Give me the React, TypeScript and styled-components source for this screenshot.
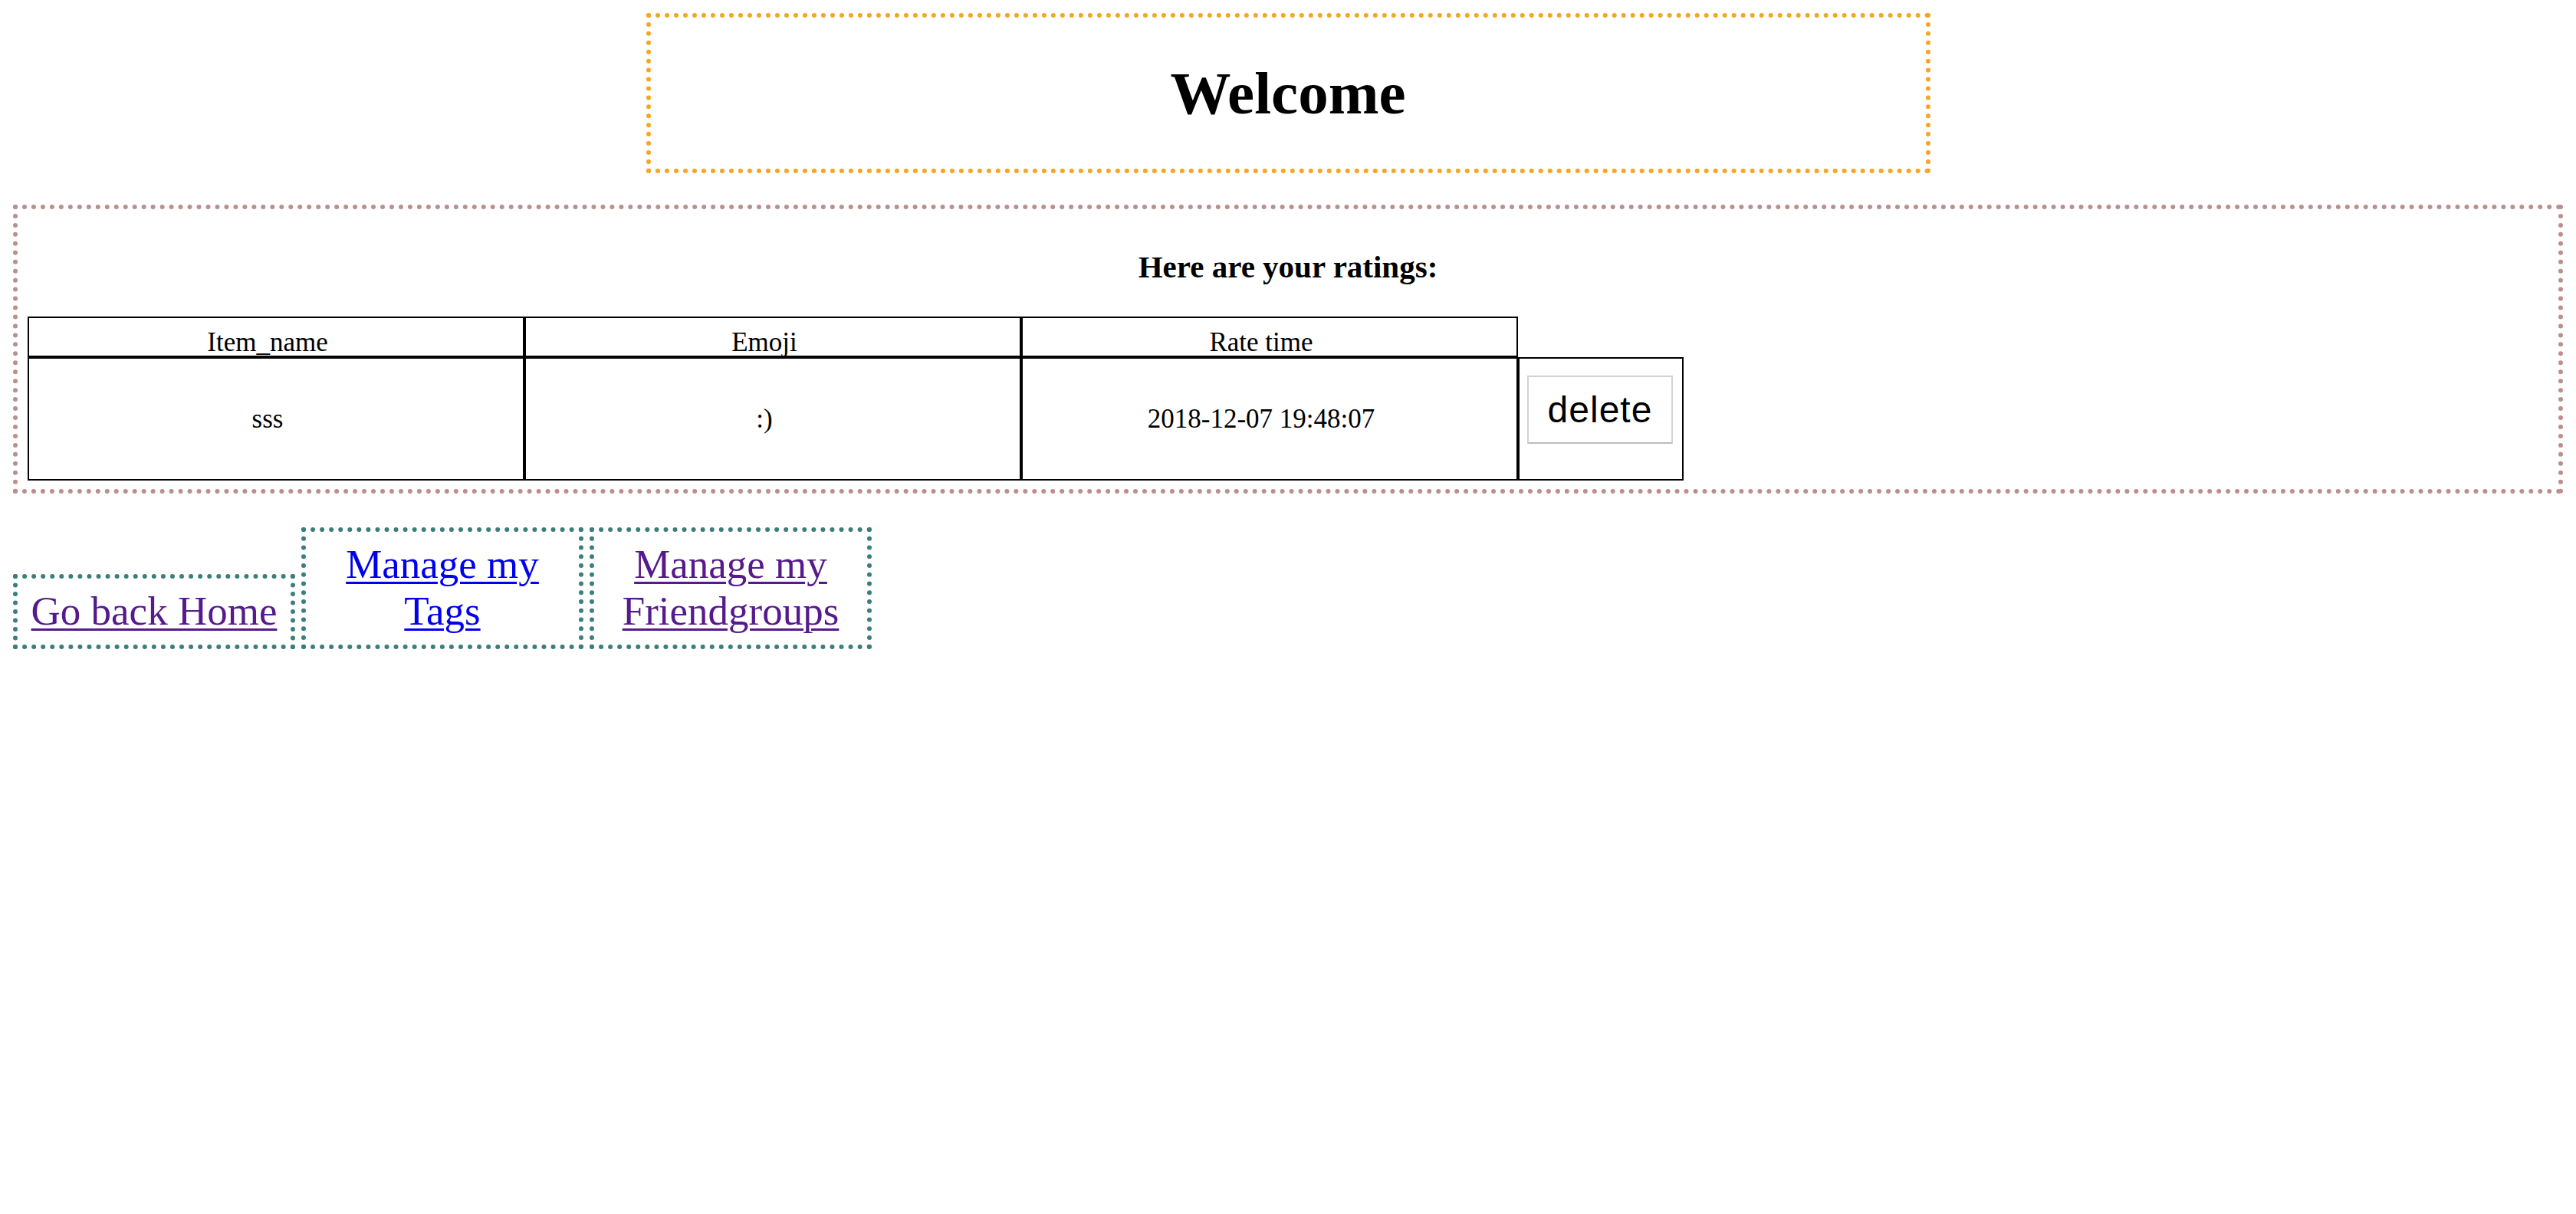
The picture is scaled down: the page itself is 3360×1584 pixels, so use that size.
import React from "react";
import styled, { createGlobalStyle } from "styled-components";

const GlobalStyle = createGlobalStyle`
  html, body {
    background: #ffffff;
  }
  body {
    margin: 17px;
    font-family: "Liberation Serif", "Times New Roman", serif;
    font-size: 35px;
    color: #000000;
  }
`;

const WelcomeBox = styled.div`
  width: 50%;
  margin: 0 auto;
  border: 6px dotted #f5a623;
  text-align: center;
`;

const Title = styled.h1`
  margin: 53px 0;
  font-size: 79px;
  line-height: 91px;
  font-weight: bold;
`;

const RatingsBox = styled.div`
  margin-top: 41px;
  border: 6px dotted #bc8f8f;
  padding: 0 13px 11px;
`;

const Heading = styled.h3`
  margin: 52px 0 41px;
  font-size: 41px;
  line-height: 47px;
  font-weight: bold;
  text-align: center;
`;

const Table = styled.table`
  border-spacing: 0;
  table-layout: fixed;
  width: 2160px;
`;

const HeadCell = styled.th`
  border: 2px solid #000;
  padding: 14px 24px 0 2px;
  font-weight: normal;
  font-size: 35px;
  line-height: 35px;
  vertical-align: top;
  text-align: center;
`;

const Cell = styled.td`
  border: 2px solid #000;
  padding: 0 24px 0 2px;
  font-size: 35px;
  vertical-align: middle;
  text-align: center;
`;

const ActionCell = styled.td`
  border: 2px solid #000;
  padding: 22px 12px 46px 10px;
  vertical-align: top;
`;

const DeleteButton = styled.button`
  display: flex;
  align-items: center;
  justify-content: center;
  box-sizing: border-box;
  width: 190px;
  height: 89px;
  padding: 0;
  background: #ffffff;
  border: 2px solid #d3d3d3;
  border-bottom-color: #bdbdbd;
  border-radius: 0;
  font-family: "Liberation Sans", Arial, sans-serif;
  font-size: 48px;
  letter-spacing: 1px;
  color: #000;
`;

const LinksRow = styled.div`
  display: flex;
  align-items: flex-end;
  gap: 8px;
  margin-top: 44px;
`;

const NavBox = styled.div`
  width: 332px;
  padding: 12px 12px 13px;
  border: 6px dotted #3b7f7b;
  text-align: center;
  font-size: 53px;
  line-height: 61px;
`;

const NavLink = styled.a<{ $visited?: boolean }>`
  color: ${(p) => (p.$visited ? "#551a8b" : "#0000ee")};
  text-decoration: underline;
  text-decoration-thickness: 3px;
  text-underline-offset: 5px;
`;

const ratings = [{ item: "sss", emoji: ":)", time: "2018-12-07 19:48:07" }];

export default function App() {
  return (
    <>
      <GlobalStyle />
      <WelcomeBox>
        <Title>Welcome</Title>
      </WelcomeBox>
      <RatingsBox>
        <Heading>Here are your ratings:</Heading>
        <Table>
          <colgroup>
            <col style={{ width: 648 }} />
            <col style={{ width: 648 }} />
            <col style={{ width: 648 }} />
            <col style={{ width: 216 }} />
          </colgroup>
          <thead>
            <tr>
              <HeadCell>Item_name</HeadCell>
              <HeadCell>Emoji</HeadCell>
              <HeadCell>Rate time</HeadCell>
            </tr>
          </thead>
          <tbody>
            {ratings.map((r) => (
              <tr key={r.time}>
                <Cell>{r.item}</Cell>
                <Cell>{r.emoji}</Cell>
                <Cell>{r.time}</Cell>
                <ActionCell>
                  <DeleteButton type="button">delete</DeleteButton>
                </ActionCell>
              </tr>
            ))}
          </tbody>
        </Table>
      </RatingsBox>
      <LinksRow>
        <NavBox>
          <NavLink href="#" $visited>
            Go back Home
          </NavLink>
        </NavBox>
        <NavBox>
          <NavLink href="#">Manage my Tags</NavLink>
        </NavBox>
        <NavBox>
          <NavLink href="#" $visited>
            Manage my Friendgroups
          </NavLink>
        </NavBox>
      </LinksRow>
    </>
  );
}
